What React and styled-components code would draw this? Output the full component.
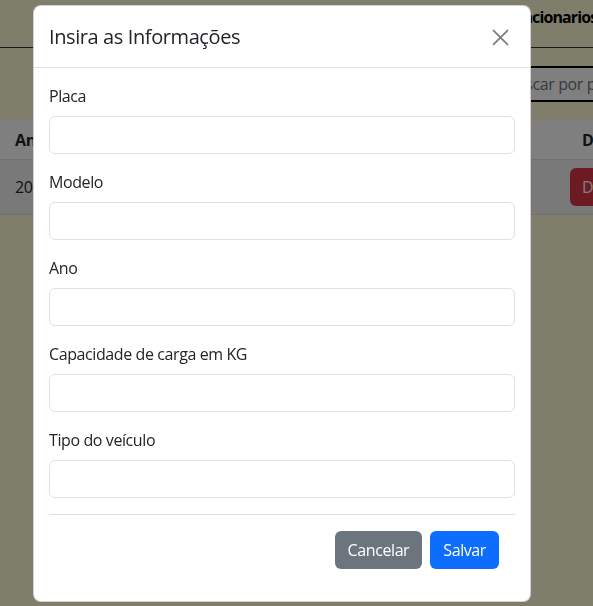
import React from "react";
import styled, { createGlobalStyle } from "styled-components";

const Global = createGlobalStyle`
  html, body { margin: 0; padding: 0; }
  body {
    background: #fefcd6;
    font-family: "Open Sans", "Noto Sans", sans-serif;
    letter-spacing: -0.4px;
    color: #212529;
    overflow: hidden;
    width: 593px;
    height: 606px;
  }
  * { box-sizing: border-box; }
`;

const Page = styled.div`
  width: 593px;
  height: 606px;
  overflow: hidden;
  position: relative;
`;

const Nav = styled.nav`
  height: 48px;
  border-bottom: 1px solid #333;
  display: flex;
  align-items: flex-start;
  padding: 6px 0 0 505px;
  white-space: nowrap;
`;

const NavLink = styled.a`
  font-weight: 700;
  font-size: 16px;
  letter-spacing: -0.9px;
  color: #000;
  text-decoration: none;
`;

const SearchBar = styled.div`
  display: flex;
  padding: 18px 0 0 492px;
`;

const SearchInput = styled.input`
  flex: 0 0 320px;
  height: 36px;
  border: 2px solid #000;
  border-radius: 0;
  background: #fff;
  padding: 0 12px;
  font-family: inherit;
  letter-spacing: inherit;
  font-size: 16px;
  &::placeholder { color: #6c757d; }
`;

const Table = styled.div`
  margin-top: 18px;
  width: 700px;
`;

const Row = styled.div`
  display: grid;
  grid-template-columns: 562px 1fr;
  align-items: center;
  height: ${(p) => (p.$head ? "40px" : "55px")};
  background: ${(p) => (p.$striped ? "#f2f2f2" : "#fff")};
  border-bottom: 1px solid #dee2e6;
`;

const Cell = styled.div`
  padding-left: ${(p) => p.$pl || 15}px;
  font-weight: ${(p) => (p.$head ? 700 : 400)};
  font-size: 16px;
  color: #212529;
`;

const DangerButton = styled.button`
  background: #dc3545;
  color: #fff;
  border: none;
  border-radius: 6px;
  height: 38px;
  padding: 0 12px;
  font-family: inherit;
  letter-spacing: inherit;
  font-size: 16px;
`;

const Backdrop = styled.div`
  position: fixed;
  inset: 0;
  background: rgba(0, 0, 0, 0.5);
`;

const Modal = styled.div`
  position: absolute;
  top: 5px;
  left: 33px;
  width: 498px;
  background: #fff;
  border: 1px solid rgba(0, 0, 0, 0.175);
  border-radius: 8px;
  display: flex;
  flex-direction: column;
`;

const Header = styled.div`
  display: flex;
  align-items: center;
  justify-content: space-between;
  padding: 16px 15px 15px;
  border-bottom: 1px solid #dee2e6;
`;

const Title = styled.h5`
  margin: 0;
  font-size: 20px;
  font-weight: 500;
  line-height: 30px;
  color: #212529;
`;

const CloseButton = styled.button`
  width: 24px;
  height: 24px;
  padding: 0;
  margin-right: 3px;
  border: none;
  background: transparent;
  display: flex;
  align-items: center;
  justify-content: center;
  opacity: 0.5;
`;

const Body = styled.div`
  padding: 16px 15px;
`;

const Group = styled.div`
  margin-bottom: 16px;
`;

const Label = styled.label`
  display: block;
  font-size: 16px;
  line-height: 24px;
  margin-bottom: 8px;
  color: #212529;
`;

const Input = styled.input`
  display: block;
  width: 100%;
  height: 38px;
  border: 1px solid #dee2e6;
  border-radius: 6px;
  padding: 6px 12px;
  font-family: inherit;
  font-size: 16px;
  background: #fff;
`;

const Footer = styled.div`
  display: flex;
  justify-content: flex-end;
  gap: 8px;
  border-top: 1px solid #dee2e6;
  padding: 16px 16px 16px 0;
`;

const Button = styled.button`
  height: 38px;
  padding: 0 13px;
  border: none;
  border-radius: 6px;
  font-family: inherit;
  letter-spacing: inherit;
  font-size: 16px;
  color: #fff;
  background: ${(p) => (p.$variant === "primary" ? "#0d6efd" : "#6c757d")};
`;

const fields = ["Placa", "Modelo", "Ano", "Capacidade de carga em KG", "Tipo do veículo"];

export default function App() {
  return (
    <Page>
      <Global />
      <Nav>
        <NavLink href="#">Funcionarios</NavLink>
      </Nav>
      <SearchBar>
        <SearchInput placeholder="Buscar por placa" />
      </SearchBar>
      <Table>
        <Row $head>
          <Cell $head>Ano</Cell>
          <Cell $head $pl={20}>Deletar</Cell>
        </Row>
        <Row $striped>
          <Cell>2020</Cell>
          <Cell $pl={8}>
            <DangerButton>Deletar</DangerButton>
          </Cell>
        </Row>
      </Table>
      <Backdrop />
      <Modal>
        <Header>
          <Title>Insira as Informações</Title>
          <CloseButton aria-label="Fechar">
            <svg width="17" height="17" viewBox="0 0 16 16">
              <path d="M1 1 L15 15 M15 1 L1 15" stroke="#000" strokeWidth="1.7" />
            </svg>
          </CloseButton>
        </Header>
        <Body>
          {fields.map((f) => (
            <Group key={f}>
              <Label>{f}</Label>
              <Input />
            </Group>
          ))}
          <Footer>
            <Button>Cancelar</Button>
            <Button $variant="primary">Salvar</Button>
          </Footer>
        </Body>
      </Modal>
    </Page>
  );
}
